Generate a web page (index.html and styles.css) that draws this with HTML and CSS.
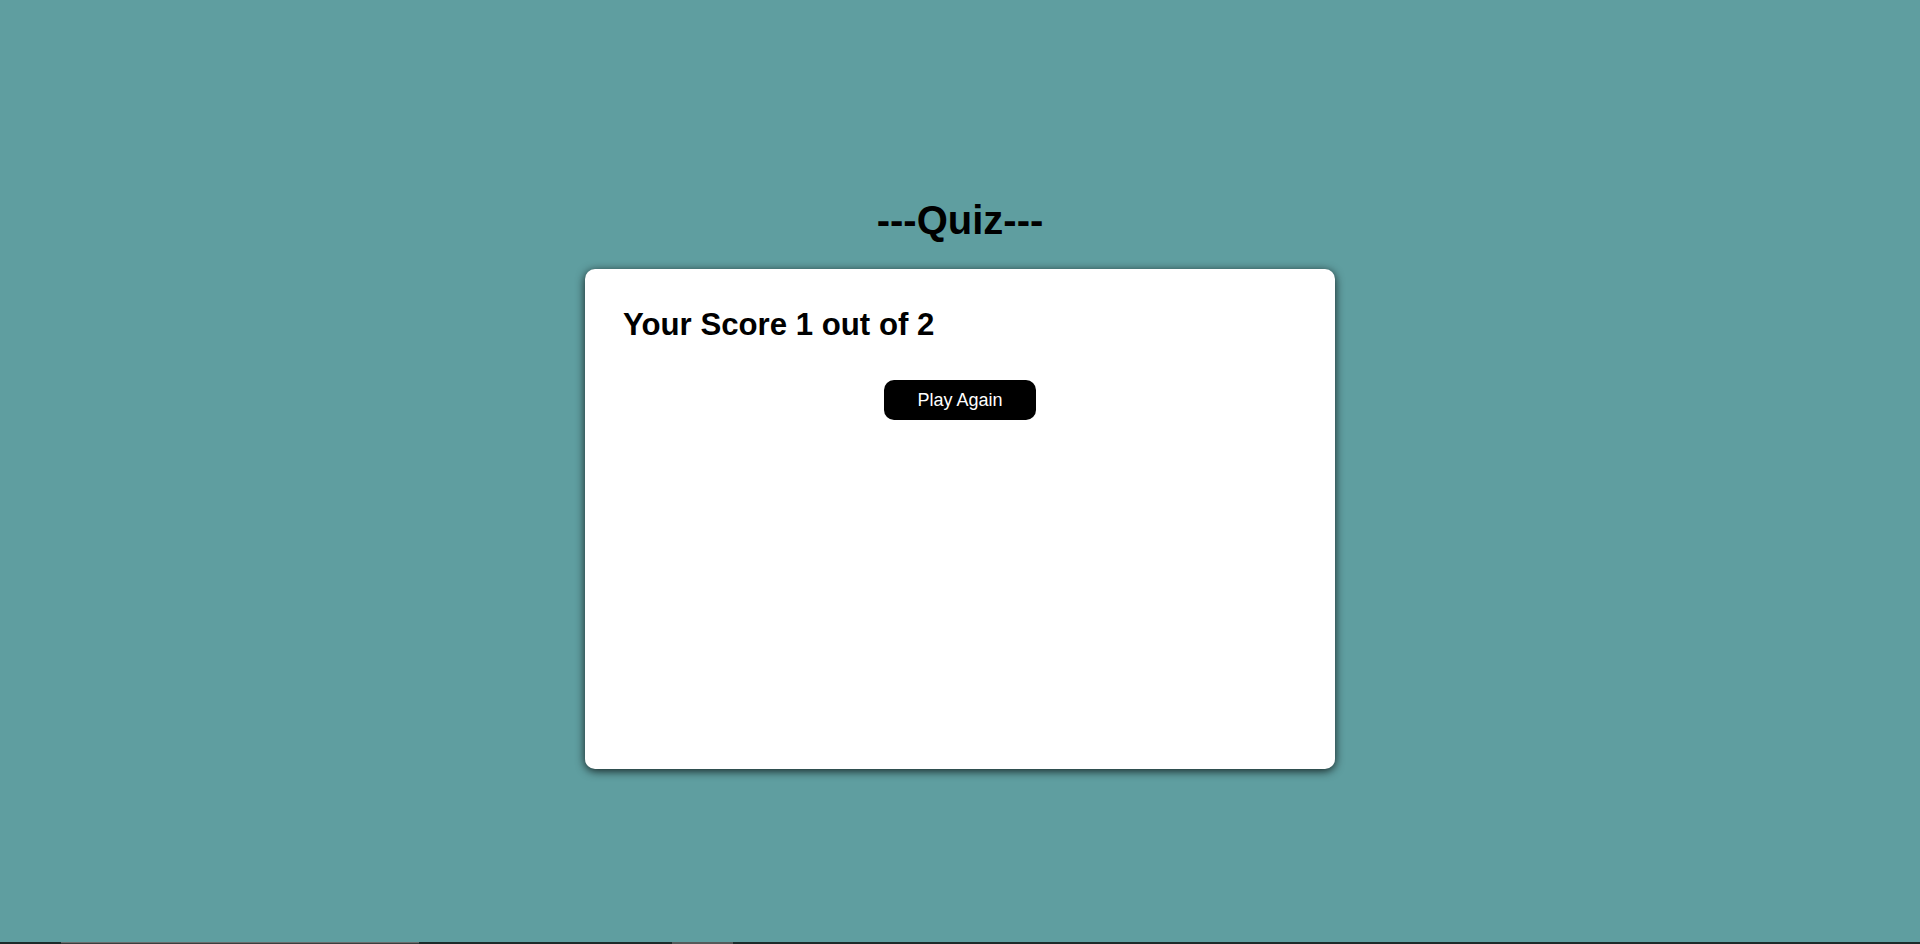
FILE: index.html
```html
<!DOCTYPE html>
<html lang="en">
<head>
<meta charset="utf-8">
<title>Quiz</title>
<link rel="stylesheet" href="styles.css">
</head>
<body>
<div class="page">
  <main class="app">
    <h1 class="title">---Quiz---</h1>
    <section class="card">
      <h2 class="score">Your Score 1 out of 2</h2>
      <div class="actions">
        <button class="btn">Play Again</button>
      </div>
    </section>
  </main>
  <div class="edge">
    <span class="edge-a"></span>
    <span class="edge-b"></span>
    <span class="edge-a edge-gap"></span>
    <span class="edge-c"></span>
    <span class="edge-a edge-rest"></span>
  </div>
</div>
</body>
</html>
```

FILE: styles.css
```css
* { box-sizing: border-box; }
html, body { margin: 0; padding: 0; }
body {
  background: #5f9ea0;
  font-family: "Liberation Sans", Arial, sans-serif;
  color: #000;
}
.page {
  height: 944px;
  display: flex;
  flex-direction: column;
}
.app {
  flex: 1;
  display: flex;
  flex-direction: column;
  align-items: center;
  padding-top: 197px;
}
.title {
  margin: 0 0 26px;
  font-size: 40px;
  font-weight: bold;
  line-height: 46px;
}
.card {
  width: 750px;
  height: 500px;
  background: #fff;
  border-radius: 10px;
  box-shadow: 0 2px 10px rgba(0, 0, 0, 0.8);
  padding: 38px 38px;
}
.score {
  margin: 0;
  font-size: 31.2px;
  line-height: 35px;
  font-weight: bold;
}
.actions {
  display: flex;
  justify-content: center;
  margin-top: 38px;
}
.btn {
  width: 152px;
  height: 40px;
  background: #000;
  color: #fff;
  border: none;
  border-radius: 10px;
  font-family: "Liberation Sans", Arial, sans-serif;
  font-size: 18px;
  padding: 0;
}
.edge {
  height: 2px;
  display: flex;
}
.edge-a { background: #1d2b2a; width: 61px; }
.edge-b { background: #3a3f3f; border-top: 1px solid #6a6a6a; width: 358px; }
.edge-gap { width: 253px; }
.edge-c { background: #555a5a; width: 61px; }
.edge-rest { flex: 1; }
```
